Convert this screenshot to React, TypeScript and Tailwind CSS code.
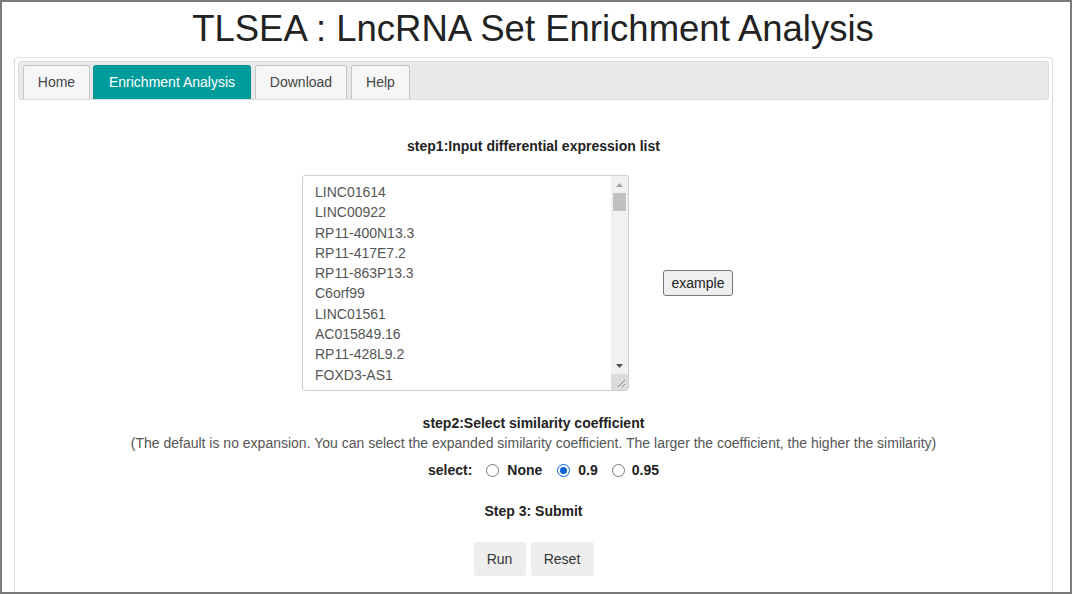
import React from "react";

const items = [
  "LINC01614",
  "LINC00922",
  "RP11-400N13.3",
  "RP11-417E7.2",
  "RP11-863P13.3",
  "C6orf99",
  "LINC01561",
  "AC015849.16",
  "RP11-428L9.2",
  "FOXD3-AS1",
  "RP11-513I15.6",
];

function Radio({ checked }: { checked?: boolean }) {
  return checked ? (
    <span className="inline-flex w-[13px] h-[13px] rounded-full border border-[#0b63d6] items-center justify-center bg-white">
      <span className="w-[7px] h-[7px] rounded-full bg-[#0b63d6]" />
    </span>
  ) : (
    <span className="inline-block w-[13px] h-[13px] rounded-full border border-[#767676] bg-white" />
  );
}

export default function App() {
  return (
    <div
      className="w-[1072px] h-[594px] overflow-hidden bg-white border-2 border-[#7a7a7a] flex flex-col"
      style={{ fontFamily: '"Liberation Sans", Arial, sans-serif' }}
    >
      <div className="h-[55px] flex items-center justify-center">
        <h1 className="text-[36.5px] leading-none text-[#222] mr-[6px]">
          TLSEA : LncRNA Set Enrichment Analysis
        </h1>
      </div>
      <div className="ml-[12px] mr-[17px] flex-1 border border-[#dddddd] border-b-0 rounded-t-[4px] p-[3px] flex flex-col">
        <div className="h-[39px] shrink-0 bg-[#e9e9e9] border border-[#dddddd] rounded-[3px] flex items-end pl-[4px] gap-[3px]">
          <div className="w-[67px] h-[34px] bg-[#f6f6f6] border border-[#c5c5c5] border-b-0 rounded-t-[3px] flex items-center justify-center text-[14px] text-[#454545]">
            Home
          </div>
          <div className="w-[158px] h-[34px] bg-[#009b9b] border border-[#009090] border-b-0 rounded-t-[3px] flex items-center justify-center text-[14px] text-white">
            Enrichment Analysis
          </div>
          <div className="w-[92px] h-[34px] ml-[1px] bg-[#f6f6f6] border border-[#c5c5c5] border-b-0 rounded-t-[3px] flex items-center justify-center text-[14px] text-[#454545]">
            Download
          </div>
          <div className="w-[59px] h-[34px] ml-[1px] bg-[#f6f6f6] border border-[#c5c5c5] border-b-0 rounded-t-[3px] flex items-center justify-center text-[14px] text-[#454545]">
            Help
          </div>
        </div>

        <div className="flex flex-col items-center">
          <div className="mt-[38px] h-[16px] leading-[16px] text-[14px] font-bold text-[#222]">
            step1:Input differential expression list
          </div>
        </div>

        <div className="mt-[21px] flex items-center ml-[284px]">
          <div className="w-[327px] h-[216px] border border-[#cfcfcf] rounded-[3px] flex overflow-hidden">
            <div className="flex-1 pl-[12px] pt-[6px] overflow-hidden">
              {items.map((t) => (
                <div key={t} className="h-[20.3px] leading-[20.3px] text-[14px] text-[#555] whitespace-nowrap">
                  {t}
                </div>
              ))}
            </div>
            <div className="w-[17px] h-full bg-[#f1f1f1] flex flex-col items-center">
              <div className="h-[17px] w-full flex items-center justify-center">
                <svg width="7" height="4" viewBox="0 0 7 4">
                  <path d="M0 4 L3.5 0 L7 4 Z" fill="#a3a3a3" />
                </svg>
              </div>
              <div className="w-[13px] h-[18px] bg-[#c1c1c1]" />
              <div className="flex-1" />
              <div className="h-[17px] w-full flex items-center justify-center">
                <svg width="7" height="4" viewBox="0 0 7 4">
                  <path d="M0 0 L3.5 4 L7 0 Z" fill="#505050" />
                </svg>
              </div>
              <div className="h-[16px] w-full bg-[#dcdcdc] flex items-end justify-end pr-[2px] pb-[2px]">
                <svg width="10" height="10" viewBox="0 0 10 10">
                  <path d="M9 2 L2 9 M9 6 L6 9" stroke="#8a8a8a" strokeWidth="1" />
                </svg>
              </div>
            </div>
          </div>
          <button className="ml-[34px] w-[70px] h-[26px] bg-[#efefef] border border-[#767676] rounded-[3px] text-[14px] text-[#222] leading-none">
            example
          </button>
        </div>

        <div className="flex flex-col items-center">
          <div className="mt-[24px] h-[16px] leading-[16px] text-[14px] font-bold text-[#222]">
            step2:Select similarity coefficient
          </div>
          <div className="mt-[4px] h-[16px] leading-[16px] text-[14px] text-[#555]">
            (The default is no expansion. You can select the expanded similarity coefficient. The larger the coefficient, the higher the similarity)
          </div>
          <div className="mt-[11px] h-[16px] pl-[20px] flex items-center text-[14px] font-bold text-[#222]">
            <span>select:</span>
            <span className="ml-[14px] flex items-center"><Radio /></span>
            <span className="ml-[8px]">None</span>
            <span className="ml-[15px] flex items-center"><Radio checked /></span>
            <span className="ml-[8px]">0.9</span>
            <span className="ml-[14px] flex items-center"><Radio /></span>
            <span className="ml-[7px]">0.95</span>
          </div>
          <div className="mt-[25px] h-[16px] leading-[16px] text-[14px] font-bold text-[#222]">
            Step 3: Submit
          </div>
          <div className="mt-[23px] flex gap-[5px]">
            <button className="w-[52px] h-[34px] bg-[#eeeeee] rounded-[3px] text-[14px] text-[#333]">Run</button>
            <button className="w-[63px] h-[34px] bg-[#eeeeee] rounded-[3px] text-[14px] text-[#333]">Reset</button>
          </div>
        </div>
      </div>
    </div>
  );
}
